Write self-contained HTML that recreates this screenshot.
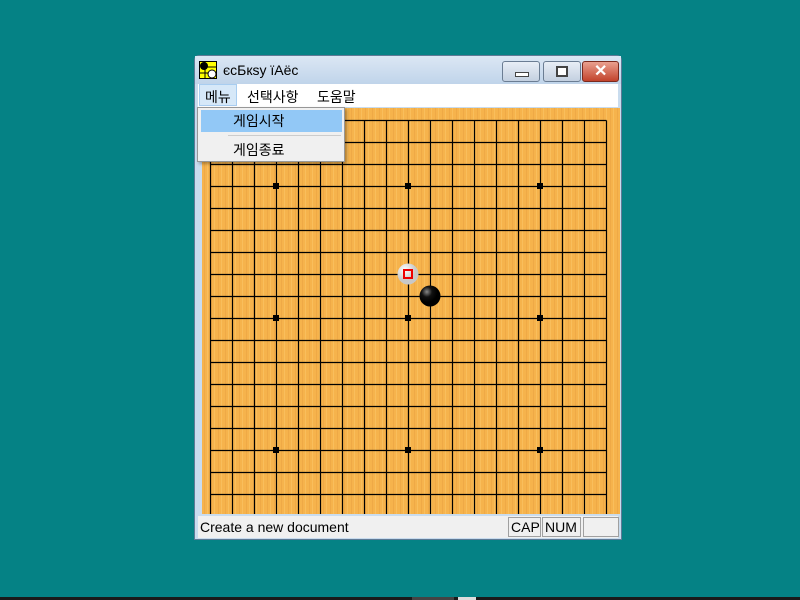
<!DOCTYPE html>
<html><head><meta charset="utf-8"><style>
body{margin:0;width:800px;height:600px;background:#058285;position:relative;overflow:hidden;font-family:"Liberation Sans","Noto Sans CJK KR",sans-serif}
.win{position:absolute;left:194px;top:55px;width:428px;height:485px;background:#c9dcee;border:1px solid #5f7a96;box-sizing:border-box;border-radius:5px 5px 0 0}
.title{position:absolute;left:0;top:0;width:426px;height:28px;background:linear-gradient(#dbe7f4,#c0d4ea)}
.t{position:absolute;left:28px;top:6px;font-size:14px;color:#000}
.btn{position:absolute;top:5px;height:19px;border:1px solid #6b7d93;border-radius:3px;background:linear-gradient(#e8eef6,#c3d0e0)}
.menu{position:absolute;left:3px;top:28px;width:420px;height:23px;background:#fff}
.mi{position:absolute;top:3px;font-size:14px}
.board{position:absolute;left:7px;top:52px;width:418px;height:406px;background:#f5b049;overflow:hidden}
.status{position:absolute;left:3px;top:460px;width:420px;height:22px;background:#f0f0f0}
.pane{position:absolute;top:1px;height:20px;border:1px solid #a0a0a0;box-sizing:border-box;font-size:14px;line-height:19px;padding-left:2px}
.dd{position:absolute;left:197px;top:107px;width:148px;height:55px;background:#f0f0f0;border:1px solid #979797;box-sizing:border-box;box-shadow:2px 2px 3px rgba(0,0,0,.3)}
</style></head><body>
<div class="win">
<div class="title">
<svg style="position:absolute;left:4px;top:5px" width="18" height="18"><rect x="0.5" y="0.5" width="17" height="17" fill="#ff0" stroke="#000"/><path d="M6 1V17M1 12H17M6 6H17" stroke="#000"/><circle cx="5" cy="5" r="4" fill="#000"/><circle cx="13" cy="13" r="4" fill="#fff" stroke="#000"/></svg>
<div class="t">єсБкsу їАёс</div>
<div class="btn" style="left:307px;width:36px"><div style="position:absolute;left:12px;top:10px;width:12px;height:3px;background:#fff;border:1px solid #444"></div></div>
<div class="btn" style="left:348px;width:36px"><div style="position:absolute;left:12px;top:4px;width:8px;height:7px;border:2px solid #444;background:#fff"></div></div>
<div class="btn" style="left:387px;width:35px;background:linear-gradient(#e9a08f,#c2432c);border-color:#7a2a1e"><div style="position:absolute;left:11px;top:-1px;color:#fff;font-weight:bold;font-size:16px">✕</div></div>
</div>
<div class="menu">
<div style="position:absolute;left:1px;top:0;width:38px;height:22px;background:#d6e8f8;border:1px solid #a8cdf0;box-sizing:border-box"></div>
<div class="mi" style="left:7px">메뉴</div><div class="mi" style="left:49px">선택사항</div><div class="mi" style="left:119px">도움말</div>
</div>
<div class="board">
<svg width="418" height="406" style="position:absolute;left:0;top:0">
<defs><pattern id="w" width="7" height="406" patternUnits="userSpaceOnUse"><rect width="7" height="406" fill="#f6b34c"/><rect x="2" width="1" height="406" fill="#e8a040" opacity=".5"/><rect x="5" width="1" height="406" fill="#fcc468" opacity=".6"/></pattern></defs>
<rect width="418" height="406" fill="url(#w)"/>
<g stroke="#000" stroke-width="1.2" transform="translate(-200.5,-106.5)">
<path d="M209 119V515M231 119V515M253 119V515M275 119V515M297 119V515M319 119V515M341 119V515M363 119V515M385 119V515M407 119V515M429 119V515M451 119V515M473 119V515M495 119V515M517 119V515M539 119V515M561 119V515M583 119V515M605 119V515"/>
<path d="M209 119H605M209 141H605M209 163H605M209 185H605M209 207H605M209 229H605M209 251H605M209 273H605M209 295H605M209 317H605M209 339H605M209 361H605M209 383H605M209 405H605M209 427H605M209 449H605M209 471H605M209 493H605"/>
</g>
<g fill="#000" transform="translate(-201,-107)">
<rect x="272" y="182" width="6" height="6"/><rect x="404" y="182" width="6" height="6"/><rect x="536" y="182" width="6" height="6"/>
<rect x="272" y="314" width="6" height="6"/><rect x="404" y="314" width="6" height="6"/><rect x="536" y="314" width="6" height="6"/>
<rect x="272" y="446" width="6" height="6"/><rect x="404" y="446" width="6" height="6"/><rect x="536" y="446" width="6" height="6"/>
</g>
<defs><radialGradient id="b" cx=".35" cy=".3"><stop offset="0" stop-color="#888"/><stop offset=".5" stop-color="#111"/><stop offset="1" stop-color="#000"/></radialGradient><radialGradient id="wh" cx=".35" cy=".3"><stop offset="0" stop-color="#fff"/><stop offset="1" stop-color="#c8c8c8"/></radialGradient></defs>
<circle cx="228" cy="188" r="10.5" fill="url(#b)"/>
<circle cx="206" cy="166" r="10.5" fill="url(#wh)"/>
<rect x="202" y="162" width="8" height="8" fill="none" stroke="#e00" stroke-width="2"/>
</svg>
</div>
<div class="status">
<div style="position:absolute;left:2px;top:3px;font-size:14px">Create a new document</div>
<div class="pane" style="left:310px;width:33px">CAP</div>
<div class="pane" style="left:344px;width:39px">NUM</div>
<div class="pane" style="left:385px;width:36px"></div>
</div>
</div>
<div class="dd">
<div style="position:absolute;left:3px;top:2px;width:141px;height:22px;background:#92c8f6"></div>
<div style="position:absolute;left:35px;top:3px;font-size:14px">게임시작</div>
<div style="position:absolute;left:30px;top:27px;width:113px;height:1px;background:#ccc"></div>
<div style="position:absolute;left:35px;top:32px;font-size:14px">게임종료</div>
</div>
<div style="position:absolute;left:0;top:597px;width:800px;height:3px;background:#1a1a1a"></div>
<div style="position:absolute;left:412px;top:597px;width:42px;height:3px;background:#444"></div>
<div style="position:absolute;left:458px;top:597px;width:18px;height:3px;background:#ddd"></div>
</body></html>
